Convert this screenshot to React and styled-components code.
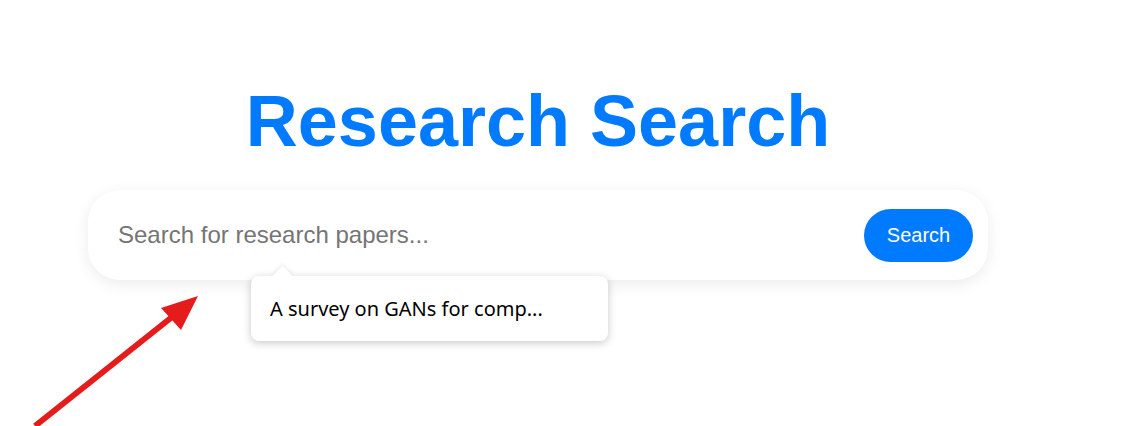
import styled, { createGlobalStyle } from "styled-components";

const GlobalStyle = createGlobalStyle`
    html, body {
        margin: 0;
        padding: 0;
        background: #fff;
        font-family: "Liberation Sans", Arial, sans-serif;
    }
`;

export default function App() {
    return (
        <>
            <GlobalStyle />
            <Page>
                <Title>Research Search</Title>
                <SearchWrap>
                    <SearchBar>
                        <SearchInput placeholder="Search for research papers..." />
                        <SearchButton>Search</SearchButton>
                    </SearchBar>
                    <Suggestion>A survey on GANs for comp...</Suggestion>
                </SearchWrap>
            </Page>
            <Pointer width="180" height="140" viewBox="0 0 180 140">
                <line x1="3" y1="136" x2="140" y2="27" stroke="#e41c1c" strokeWidth="6" />
                <polygon points="166,6 129,18 149,40" fill="#e41c1c" />
            </Pointer>
        </>
    );
}

/* ================= styles ================= */

const Page = styled.div`
    width: 1076px;
    height: 426px;
    display: flex;
    flex-direction: column;
    align-items: center;
    padding-top: 76px;
    box-sizing: border-box;
`;

const Title = styled.h1`
    margin: 0;
    font-family: "Liberation Sans", Arial, sans-serif;
    font-size: 72px;
    font-weight: 700;
    line-height: 90px;
    color: #007bff;
`;

const SearchWrap = styled.div`
    position: relative;
    margin-top: 24px;
    width: 900px;
`;

const SearchBar = styled.div`
    height: 90px;
    box-sizing: border-box;
    display: flex;
    align-items: center;
    padding: 0 15px 0 28px;
    background: #fff;
    border-radius: 32px;
    box-shadow: 0 4px 16px rgba(0, 0, 0, 0.08);
`;

const SearchInput = styled.input`
    flex: 1;
    min-width: 0;
    border: none;
    outline: none;
    background: transparent;
    font-family: "Liberation Sans", Arial, sans-serif;
    font-size: 24px;
    color: #333;

    &::placeholder {
        color: #757575;
    }
`;

const SearchButton = styled.button`
    width: 109px;
    height: 53px;
    border: none;
    border-radius: 27px;
    background: #007bff;
    color: #fff;
    font-family: "Liberation Sans", Arial, sans-serif;
    font-size: 20px;
`;

const Suggestion = styled.div`
    position: absolute;
    left: 163px;
    top: 86px;
    width: 357px;
    height: 65px;
    box-sizing: border-box;
    padding: 0 19px;
    display: flex;
    align-items: center;
    background: #fff;
    border-radius: 8px;
    box-shadow: 0 2px 8px rgba(0, 0, 0, 0.22);
    font-family: "Noto Sans", "Open Sans", sans-serif;
    font-size: 20px;
    color: #000;

    &::before {
        content: "";
        position: absolute;
        left: 24px;
        top: -7px;
        width: 15px;
        height: 15px;
        background: #fff;
        transform: rotate(45deg);
        box-shadow: -2px -2px 4px rgba(0, 0, 0, 0.06);
    }
`;

const Pointer = styled.svg`
    position: absolute;
    left: 32px;
    top: 290px;
`;
